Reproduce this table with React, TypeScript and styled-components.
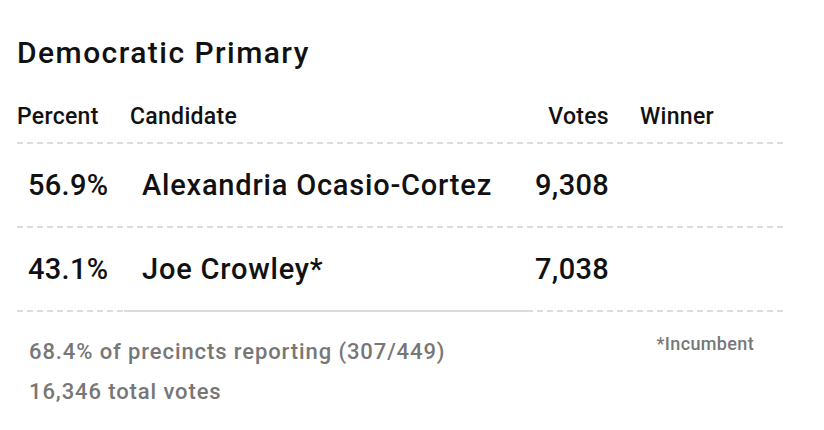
import React from "react";
import styled, { createGlobalStyle } from "styled-components";

const Global = createGlobalStyle`
  html, body { margin: 0; padding: 0; background: #fff; }
  body { font-family: Roboto, "Liberation Sans", sans-serif; color: #111; }
`;

const Wrap = styled.div`
  width: 767px;
  padding: 33px 0 0 17px;
`;

const Title = styled.h1`
  margin: 0 0 27px 0;
  font-size: 30px;
  line-height: 40px;
  font-weight: 500;
  letter-spacing: 1.45px;
  color: #111;
`;

const COLS = "107px 408px 93px 159px";

const Row = styled.div<{ $h: number; $head?: boolean }>`
  display: grid;
  grid-template-columns: ${COLS};
  height: ${(p) => p.$h}px;
  box-sizing: border-box;
  padding-top: ${(p) => (p.$head ? 2 : 0)}px;
  align-items: ${(p) => (p.$head ? "start" : "center")};
  background: repeating-linear-gradient(to right, #dcdcdc 0 6px, transparent 6px 10px) left bottom / 100% 2px no-repeat;
`;

const Cell = styled.div<{ $align?: "left" | "right"; $pl?: number; $pr?: number; $solid?: boolean; $head?: boolean; $num?: boolean }>`
  height: ${(p) => (p.$head ? "auto" : "100%")};
  box-sizing: border-box;
  display: flex;
  align-items: center;
  justify-content: ${(p) => (p.$align === "right" ? "flex-end" : "flex-start")};
  padding-left: ${(p) => p.$pl ?? 0}px;
  padding-right: ${(p) => p.$pr ?? 0}px;
  font-size: ${(p) => (p.$head ? 23 : 29)}px;
  line-height: 30px;
  letter-spacing: ${(p) => (p.$head || p.$num ? 0.3 : 0.8)}px;
  font-weight: 500;
  border-bottom: 2px solid ${(p) => (p.$solid ? "#dcdcdc" : "transparent")};
  white-space: nowrap;
`;

const Footer = styled.div`
  display: flex;
  justify-content: space-between;
  padding: 20px 30px 0 12px;
  color: #777;
  font-weight: 500;
`;

const Notes = styled.div`
  font-size: 22px;
  line-height: 40px;
  letter-spacing: 0.9px;
`;

const Incumbent = styled.div`
  font-size: 18px;
  line-height: 24px;
  letter-spacing: 0.35px;
`;

const results = [
  { pct: "56.9%", name: "Alexandria Ocasio-Cortez", votes: "9,308" },
  { pct: "43.1%", name: "Joe Crowley*", votes: "7,038" },
];

export default function App() {
  return (
    <>
      <Global />
      <Wrap>
        <Title>Democratic Primary</Title>
        <Row $h={44} $head>
          <Cell $head>Percent</Cell>
          <Cell $head $pl={6}>Candidate</Cell>
          <Cell $head $align="right" $pr={16}>Votes</Cell>
          <Cell $head $pl={15}>Winner</Cell>
        </Row>
        {results.map((r, i) => (
          <Row key={r.name} $h={84}>
            <Cell $num $pl={11}>{r.pct}</Cell>
            <Cell $pl={18} $solid={i === results.length - 1}>{r.name}</Cell>
            <Cell $num $align="right" $pr={16}>{r.votes}</Cell>
            <Cell />
          </Row>
        ))}
        <Footer>
          <Notes>
            <div>68.4% of precincts reporting (307/449)</div>
            <div>16,346 total votes</div>
          </Notes>
          <Incumbent>*Incumbent</Incumbent>
        </Footer>
      </Wrap>
    </>
  );
}
